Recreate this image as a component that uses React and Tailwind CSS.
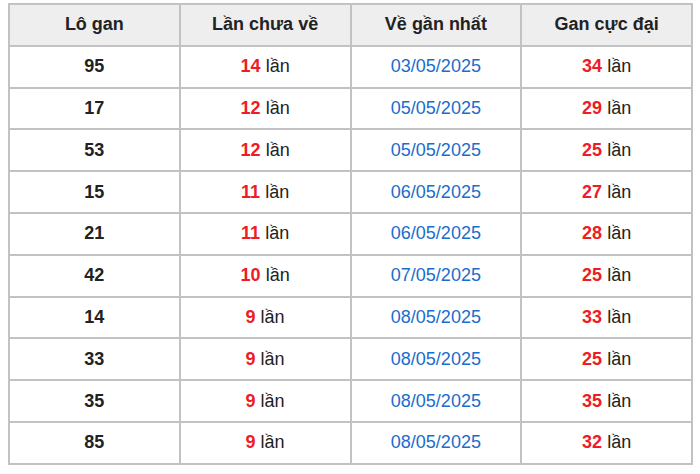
import React from "react";

const rows = [
  ["95", "14", "03/05/2025", "34"],
  ["17", "12", "05/05/2025", "29"],
  ["53", "12", "05/05/2025", "25"],
  ["15", "11", "06/05/2025", "27"],
  ["21", "11", "06/05/2025", "28"],
  ["42", "10", "07/05/2025", "25"],
  ["14", "9", "08/05/2025", "33"],
  ["33", "9", "08/05/2025", "25"],
  ["35", "9", "08/05/2025", "35"],
  ["85", "9", "08/05/2025", "32"],
];

export default function App() {
  return (
    <div className="w-[700px] h-[474px] bg-white pt-[3px] pl-[8px]" style={{ fontFamily: '"Liberation Sans", Arial, sans-serif' }}>
      <table className="w-[685px] table-fixed border-collapse text-[18px] text-[#222]">
        <thead>
          <tr className="h-[41.8px] bg-[#eeeeee]">
            {["Lô gan", "Lần chưa về", "Về gần nhất", "Gan cực đại"].map((h) => (
              <th key={h} className="border-2 border-[#c2c2c2] font-bold text-center p-0">{h}</th>
            ))}
          </tr>
        </thead>
        <tbody>
          {rows.map((r, i) => (
            <tr key={i} className="h-[41.8px]">
              <td className="border-2 border-[#c2c2c2] text-center font-bold p-0">{r[0]}</td>
              <td className="border-2 border-[#c2c2c2] text-center p-0">
                <span className="font-bold text-[#ee1c25]">{r[1]}</span> lần
              </td>
              <td className="border-2 border-[#c2c2c2] text-center p-0 text-[#1a6dcc]">{r[2]}</td>
              <td className="border-2 border-[#c2c2c2] text-center p-0">
                <span className="font-bold text-[#ee1c25]">{r[3]}</span> lần
              </td>
            </tr>
          ))}
        </tbody>
      </table>
    </div>
  );
}
